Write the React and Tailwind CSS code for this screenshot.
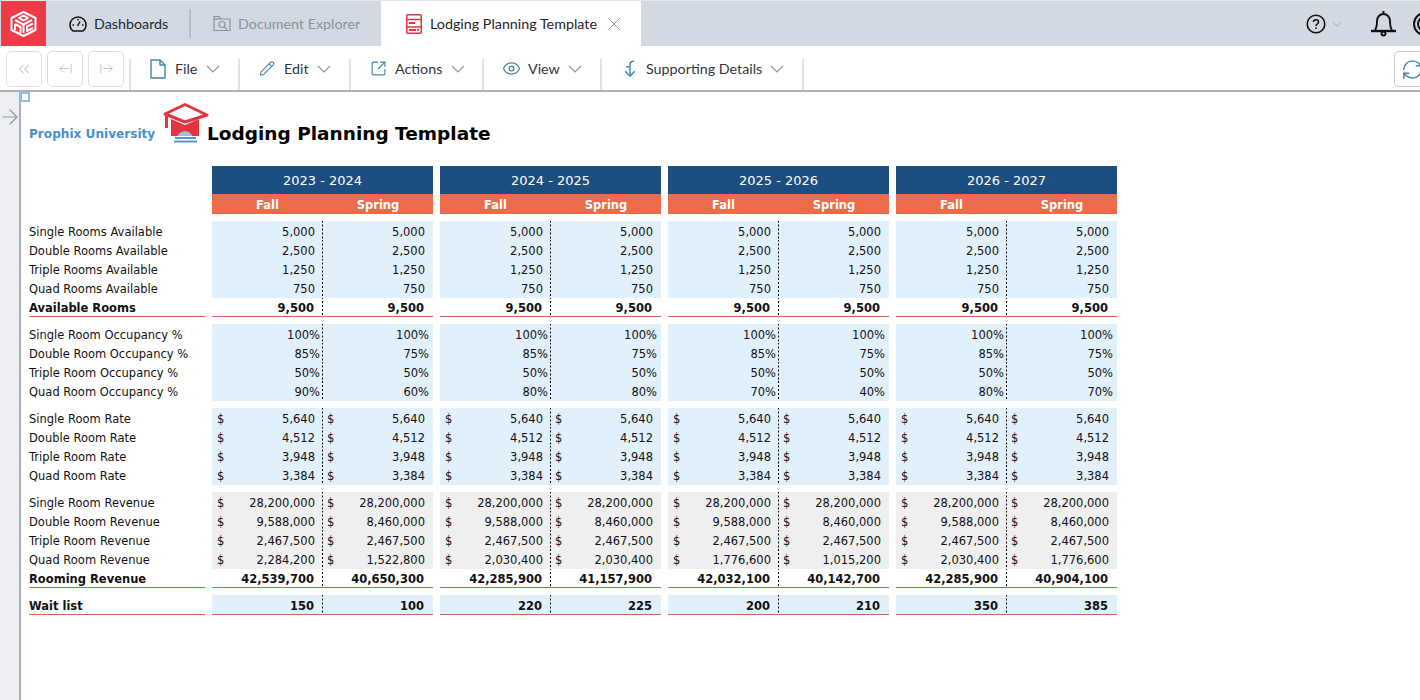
import React from "react";
import { ChevronsLeft, ArrowLeftFromLine, ArrowRightFromLine, Pencil, SquareArrowOutUpRight, Eye, X, RefreshCw, ArrowRight } from "lucide-react";

const sans = "font-['Lato','Liberation_Sans',sans-serif]";
const teal = "#3f86a8";

function Logo() {
  return (
    <svg width="27" height="26" viewBox="0 0 27 26" fill="none" stroke="#fff" strokeWidth="2" strokeLinejoin="round">
      <path d="M13.5 1 L25.5 7 V19 L13.5 25 L1.5 19 V7 Z" />
      <path d="M13.5 4.5 L18 7 L13.5 9.5 L9 7 Z" />
      <path d="M5 9 L13.5 13.5 L22 9" />
      <path d="M13.5 13.5 V22" />
      <path d="M5 13 V19 M5 13 L10.5 16 V22" />
      <path d="M23 12.5 L17 15.5 V20 L23 17" />
    </svg>
  );
}

function Cap() {
  return (
    <svg width="46" height="40" viewBox="0 0 46 40">
      <path d="M2 11 L22 1.5 L44 12 L22 19 Z" fill="#fff" stroke="#e2353f" strokeWidth="3" strokeLinejoin="round" />
      <path d="M8 16 L22 22 L36 16 V33 H29 C27 27 17 27 15 33 H8 Z" fill="#e2353f" />
      <path d="M3.5 12 V25" stroke="#e2353f" strokeWidth="3" />
      <path d="M15 33 C17 27 27 27 29 33 Z" fill="#9cc0e4" />
      <path d="M12 35 H33" stroke="#5b93cc" strokeWidth="2" />
      <path d="M11 38.5 H34" stroke="#5b93cc" strokeWidth="2" />
    </svg>
  );
}

function ReportIcon() {
  return (
    <svg width="16" height="20" viewBox="0 0 16 20" fill="none" className="shrink-0">
      <rect x="0.75" y="0.75" width="14.5" height="18.5" rx="1" stroke="#e2353f" strokeWidth="1.5" />
      <path d="M1 5.5H15M1 13H15" stroke="#e2353f" strokeWidth="1.5" />
      <rect x="3" y="8" width="6" height="2" fill="#e2353f" />
      <rect x="3" y="15" width="7" height="2" fill="#e2353f" />
      <rect x="11" y="15" width="2" height="2" fill="#e2353f" />
    </svg>
  );
}

function SupportIcon() {
  return (
    <svg width="14" height="20" viewBox="0 0 14 20" fill="none" stroke={teal} strokeWidth="1.7">
      <path d="M11.5 1 C8.5 1 7 3 7 5 V18" />
      <path d="M1.5 12.5 L7 18.5 L12.5 12.5" />
      <path d="M2.5 7.5 H6.5" />
    </svg>
  );
}

function FileIcon() {
  return (
    <svg width="16" height="20" viewBox="0 0 16 20" fill="none" stroke={teal} strokeWidth="1.4" strokeLinejoin="round">
      <path d="M1 1 H10 L15 6 V19 H1 Z" />
      <path d="M10 1 V6 H15" />
    </svg>
  );
}

function GaugeIcon() {
  return (
    <svg width="18" height="18" viewBox="0 0 18 18" fill="none" stroke="#111" strokeWidth="1.5" className="shrink-0">
      <path d="M4 16 C1.8 14.5 1 12 1 10 C1 5.5 4.5 2 9 2 C13.5 2 17 5.5 17 10 C17 12 16.2 14.5 14 16 Z" />
      <path d="M8.5 11 L11 6.5" />
      <path d="M3.5 10 H5 M13 10 H14.5 M9 4 V5.5" />
    </svg>
  );
}

function FolderIcon() {
  return (
    <svg width="18" height="17" viewBox="0 0 18 17" fill="none" stroke="#8a939c" strokeWidth="1.2" className="shrink-0">
      <path d="M1 15.5 V1.5 H6 L8 4 H17 V15.5 Z" />
      <path d="M1 4 H8" />
      <circle cx="9" cy="9.5" r="3" />
      <path d="M11.2 11.7 L14 14.5" />
    </svg>
  );
}

function Chev({ w = 14, h = 8, color = "#8e979f" }) {
  return (
    <svg width={w} height={h} viewBox="0 0 14 8" fill="none" stroke={color} strokeWidth="1.2" className="shrink-0">
      <path d="M1 1 L7 7 L13 1" />
    </svg>
  );
}

function ToolItem({ icon, label, iconBox, textW, ml = "mr-[9px]", pl = "pl-[19px]", pr = "pr-[18px]" }) {
  return (
    <div className={`flex items-center h-[31px] self-end border-r-2 border-[#dfe2e6] ${pl} ${pr} pb-[12px]`}>
      <span className={`flex items-center justify-center ${iconBox} ${ml}`}>{icon}</span>
      <span className={`text-[14.3px] text-[#2f3740] whitespace-nowrap ${textW}`}>{label}</span>
      <span className="ml-[8px]"><Chev /></span>
    </div>
  );
}

function Toolbar() {
  return (
    <div className="flex h-[46px] bg-white border-b-2 border-[#a9b2ba] relative">
      <div className="flex items-center gap-[5px] pl-[6px] pr-[5px] h-[44px] pt-[1px]">
        {[
          <ChevronsLeft size={18} strokeWidth={1.4} />,
          <ArrowLeftFromLine size={15} strokeWidth={1.5} />,
          <ArrowRightFromLine size={15} strokeWidth={1.5} />,
        ].map((ic, i) => (
          <div key={i} className="w-[36px] h-[36px] flex items-center justify-center border border-[#dcdfe3] rounded-[5px] text-[#bcc1c7]">
            {ic}
          </div>
        ))}
      </div>
      <div className="w-[2px] h-[31px] self-end bg-[#dfe2e6]" />
      <ToolItem icon={<FileIcon />} iconBox="w-[16px]" label="File" textW="w-[23px]" />
      <ToolItem icon={<Pencil size={19} color={teal} strokeWidth={1.6} />} iconBox="w-[16px]" label="Edit" textW="w-[25px]" />
      <ToolItem icon={<SquareArrowOutUpRight size={23} color={teal} strokeWidth={1.6} />} iconBox="w-[17px]" label="Actions" textW="w-[48px]" ml="mr-[8px]" pr="pr-[17px]" />
      <ToolItem icon={<Eye size={23} color={teal} strokeWidth={1.6} />} iconBox="w-[19px]" label="View" textW="w-[32px]" pl="pl-[18px]" ml="mr-[7px]" />
      <ToolItem icon={<SupportIcon />} iconBox="w-[12px]" label="Supporting Details" textW="w-[116px]" pl="pl-[22px]" ml="mr-[10px]" />
      <div className="ml-auto mt-[5px] w-[40px] h-[36px] border border-[#c3c9cf] rounded-l-[5px] border-r-0 flex items-center pl-[6px] mr-[-14px]">
        <RefreshCw size={23} color={teal} strokeWidth={1.5} className="shrink-0" />
      </div>
    </div>
  );
}

function TabBar() {
  return (
    <div className="flex h-[46px] bg-[#d2d9e3] border-t border-[#e8e8e8] items-stretch">
      <div className="w-[45px] shrink-0 bg-[#ef3b45] flex items-center justify-center ml-[1px]"><Logo /></div>
      <div className="flex items-center w-[143px] shrink-0 pl-[23px]">
        <GaugeIcon />
        <span className="ml-[7px] text-[14.3px] text-[#23282e]">Dashboards</span>
      </div>
      <div className="w-[2px] shrink-0 my-[8px] bg-[#b7bfc8]" />
      <div className="flex items-center w-[190px] shrink-0 pl-[22px]">
        <FolderIcon />
        <span className="ml-[7px] text-[14.3px] text-[#8a939c] whitespace-nowrap">Document Explorer</span>
      </div>
      <div className="flex items-center w-[260px] shrink-0 pl-[25px] bg-white">
        <ReportIcon />
        <span className="ml-[8px] text-[14.3px] text-[#1f252b] whitespace-nowrap">Lodging Planning Template</span>
        <X size={22} strokeWidth={1} className="ml-[6px] text-[#8e969e] shrink-0" />
      </div>
      <div className="ml-[665px] flex items-center shrink-0">
        <svg width="20" height="20" viewBox="0 0 20 20" fill="none" stroke="#111" strokeWidth="1.6" className="shrink-0">
          <circle cx="10" cy="10" r="8.8" />
          <path d="M7.5 8 C7.5 5 12.5 5 12.5 8 C12.5 10 10 10 10 12" />
          <path d="M10 13.4 V15" />
        </svg>
        <span className="ml-[6px]"><Chev w={10} h={6} color="#9aa2aa" /></span>
        <svg width="27" height="27" viewBox="0 0 27 27" fill="none" stroke="#111" strokeWidth="1.9" className="ml-[28px] shrink-0">
          <path d="M13.5 1 V4" />
          <path d="M5 20 C7 17 7 13 7 11 C7 7 10 4 13.5 4 C17 4 20 7 20 11 C20 13 20 17 22 20" />
          <path d="M1 21 H26" strokeWidth="2.4" />
          <circle cx="13.5" cy="23.5" r="2" />
        </svg>
        <div className="ml-[16px] w-[24px] h-[24px] border-2 border-[#111] rounded-full flex items-center justify-center shrink-0">
          <div className="w-[16px] h-[16px] border-2 border-[#111] rounded-full shrink-0" />
        </div>
      </div>
    </div>
  );
}

const years = ["2023 - 2024", "2024 - 2025", "2025 - 2026", "2026 - 2027"];

const rep = (a, b) => [[a, b], [a, b], [a, b], [a, b]];

const sections = [
  {
    rows: [
      { label: "Single Rooms Available", v: rep("5,000", "5,000") },
      { label: "Double Rooms Available", v: rep("2,500", "2,500") },
      { label: "Triple Rooms Available", v: rep("1,250", "1,250") },
      { label: "Quad Rooms Available", v: rep("750", "750") },
    ],
    total: { label: "Available Rooms", v: rep("9,500", "9,500") },
    bg: "blue",
  },
  {
    pct: true,
    rows: [
      { label: "Single Room Occupancy %", v: rep("100%", "100%") },
      { label: "Double Room Occupancy %", v: rep("85%", "75%") },
      { label: "Triple Room Occupancy %", v: rep("50%", "50%") },
      { label: "Quad Room Occupancy %", v: [["90%", "60%"], ["80%", "80%"], ["70%", "40%"], ["80%", "70%"]] },
    ],
    bg: "blue",
  },
  {
    money: true,
    rows: [
      { label: "Single Room Rate", v: rep("5,640", "5,640") },
      { label: "Double Room Rate", v: rep("4,512", "4,512") },
      { label: "Triple Room Rate", v: rep("3,948", "3,948") },
      { label: "Quad Room Rate", v: rep("3,384", "3,384") },
    ],
    bg: "blue",
  },
  {
    money: true,
    rows: [
      { label: "Single Room Revenue", v: rep("28,200,000", "28,200,000") },
      { label: "Double Room Revenue", v: rep("9,588,000", "8,460,000") },
      { label: "Triple Room Revenue", v: rep("2,467,500", "2,467,500") },
      { label: "Quad Room Revenue", v: [["2,284,200", "1,522,800"], ["2,030,400", "2,030,400"], ["1,776,600", "1,015,200"], ["2,030,400", "1,776,600"]] },
    ],
    total: { label: "Rooming Revenue", v: [["42,539,700", "40,650,300"], ["42,285,900", "41,157,900"], ["42,032,100", "40,142,700"], ["42,285,900", "40,904,100"]] },
    bg: "gray",
  },
];

const dots = "bg-[image:linear-gradient(#000_50%,transparent_50%)] bg-[length:1px_4px] bg-repeat-y bg-right";

function Cell({ value, first, bg, money, pct, bold, top }) {
  const cls = first ? "w-[111px]" : "w-[110px]";
  const pad = pct ? (first ? "pr-[3px]" : "pr-[4px]") : bold ? "pr-[9px]" : "pr-[8px]";
  return (
    <div className={`${cls} ${bg} ${first ? dots : ""} ${pad} ${top} flex items-start leading-[19px] justify-between h-full ${money ? (first ? "pl-[5px]" : "pl-[4px]") : ""} ${bold ? "font-bold" : ""}`}>
      {money ? <span>$</span> : <span />}
      <span>{value}</span>
    </div>
  );
}

function Row({ label, v, bg, money, pct, bold, line, h = "h-[19px]", top = "pt-[2px]" }) {
  return (
    <div className={`flex ${h}`}>
      <div className={`w-[176px] flex items-start ${top} leading-[19px] ${bold ? "font-bold" : ""} ${line ? "border-b border-[#c9694c]" : ""}`}>{label}</div>
      <div className="w-[7px]" />
      {v.map((p, i) => (
        <div key={i} className={`flex w-[221px] mr-[7px] ${line ? "border-b border-[#c9694c]" : ""}`}>
          <Cell value={p[0]} first bg={bg} money={money} pct={pct} bold={bold} top={top} />
          <Cell value={p[1]} bg={bg} money={money} pct={pct} bold={bold} top={top} />
        </div>
      ))}
    </div>
  );
}

function Sheet() {
  return (
    <div className="pl-[8px] text-[11.5px] text-[#111] font-['DejaVu_Sans',sans-serif]">
      <div className="flex items-center h-[71px] pt-[13px]">
        <span className="text-[#4a8fcc] font-bold text-[12.1px] w-[134px] whitespace-nowrap">Prophix University</span>
        <span className="-mt-[22px]"><Cap /></span>
        <span className="text-[18.5px] font-bold text-black -ml-[2px] leading-[26px] whitespace-nowrap">Lodging Planning Template</span>
      </div>
      <div className="h-[3px]" />
      <div className="flex">
        <div className="w-[183px]" />
        {years.map((y) => (
          <div key={y} className="w-[221px] mr-[7px]">
            <div className="h-[28px] pt-[2px] bg-[#1c4e80] text-white text-[13px] flex items-center justify-center">{y}</div>
            <div className="h-[20px] pt-[3px] bg-[#ec6c4a] text-white text-[11.5px] font-bold flex">
              <div className="w-[111px] flex items-center justify-center">Fall</div>
              <div className="w-[110px] flex items-center justify-center">Spring</div>
            </div>
          </div>
        ))}
      </div>
      <div className="h-[7px]" />
      {sections.map((s, i) => {
        const bg = s.bg === "gray" ? "bg-[#efefef]" : "bg-[#e2f0fc]";
        return (
          <div key={i} className="mb-[7px]">
            <div>
              {s.rows.map((r, j) => (
                <Row key={j} label={r.label} v={r.v} bg={bg} money={s.money} pct={s.pct} h={j === 3 ? "h-[20px]" : "h-[19px]"} />
              ))}
            </div>
            {s.total && <Row label={s.total.label} v={s.total.v} bg="bg-white" bold line top="pt-[1px]" />}
          </div>
        );
      })}
      <Row label="Wait list" v={[["150", "100"], ["220", "225"], ["200", "210"], ["350", "385"]]} bg="bg-[#e2f0fc]" bold line h="h-[20px]" />
    </div>
  );
}

export default function App() {
  return (
    <div className={`w-[1420px] h-[700px] overflow-hidden flex flex-col bg-white ${sans}`}>
      <TabBar />
      <Toolbar />
      <div className="flex flex-1 relative">
        <div className="w-[21px] bg-[#eceef2] border-r-2 border-[#a9b0b8] flex justify-center pt-[13px] shrink-0">
          <ArrowRight size={24} strokeWidth={1.2} className="text-[#8e959c] shrink-0" />
        </div>
        <span className="absolute left-[20px] top-0 w-[10px] h-[10px] border-2 border-[#8fc0e8] bg-white" />
        <Sheet />
      </div>
    </div>
  );
}
